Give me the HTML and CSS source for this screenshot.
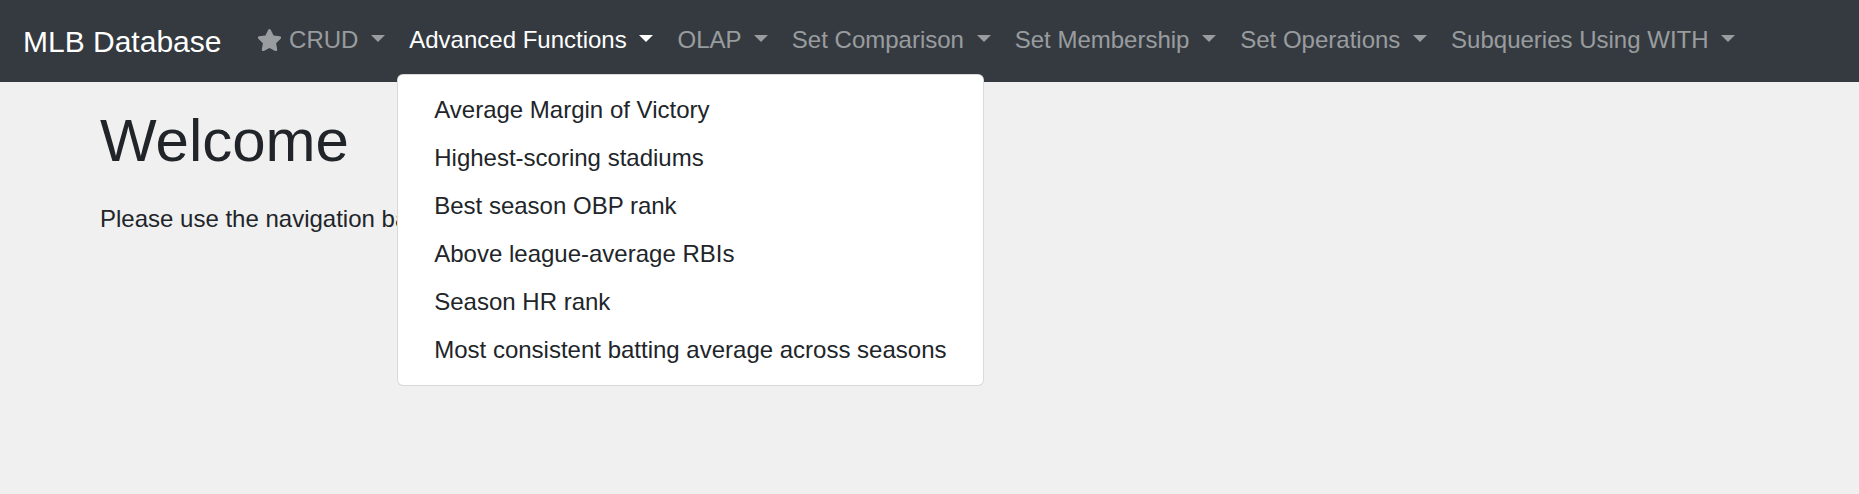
FILE: index.html
```html
<!DOCTYPE html>
<html lang="en">
<head>
<meta charset="utf-8">
<title>MLB Database</title>
<link rel="stylesheet" href="styles.css">
</head>
<body>
<nav class="navbar">
  <a class="brand" href="#">MLB Database</a>
  <ul class="nav">
    <li class="nav-item"><a class="nav-link toggle" href="#"><svg class="star" viewBox="0 0 576 512" aria-hidden="true"><path d="M259.3 17.8L194 150.2 47.9 171.5c-26.2 3.8-36.7 36.1-17.7 54.6l105.7 103-25 145.5c-4.5 26.3 23.2 46 46.4 33.7L288 439.6l130.7 68.7c23.2 12.2 50.9-7.4 46.4-33.7l-25-145.5 105.7-103c19-18.5 8.5-50.8-17.7-54.6L382 150.2 316.7 17.8c-11.7-23.6-45.6-23.9-57.4 0z"/></svg> CRUD </a></li>
    <li class="nav-item open"><a class="nav-link toggle active" href="#">Advanced Functions </a>
      <div class="menu">
        <a class="menu-item" href="#">Average Margin of Victory</a>
        <a class="menu-item" href="#">Highest-scoring stadiums</a>
        <a class="menu-item" href="#">Best season OBP rank</a>
        <a class="menu-item" href="#">Above league-average RBIs</a>
        <a class="menu-item" href="#">Season HR rank</a>
        <a class="menu-item" href="#">Most consistent batting average across seasons</a>
      </div>
    </li>
    <li class="nav-item"><a class="nav-link toggle" href="#">OLAP </a></li>
    <li class="nav-item"><a class="nav-link toggle" href="#">Set Comparison </a></li>
    <li class="nav-item"><a class="nav-link toggle" href="#">Set Membership </a></li>
    <li class="nav-item"><a class="nav-link toggle" href="#">Set Operations </a></li>
    <li class="nav-item"><a class="nav-link toggle" href="#">Subqueries Using WITH </a></li>
  </ul>
</nav>
<main class="content">
  <h1 class="title">Welcome</h1>
  <p class="lead">Please use the navigation bar above to explore the database.</p>
</main>
</body>
</html>
```

FILE: styles.css
```css
* { box-sizing: border-box; }

html, body {
  margin: 0;
  padding: 0;
}

html {
  background: #f0f0f0;
}

body {
  min-height: 100vh;
  background: #f0f0f0;
  color: #212529;
  font-family: "Liberation Sans", Arial, sans-serif;
  font-size: 24px;
  line-height: 36px;
}

a { text-decoration: none; }

.navbar {
  display: flex;
  align-items: center;
  height: 82px;
  padding: 11px 23px;
  background: #343a40;
}

.brand {
  display: inline-block;
  color: #fff;
  font-size: 30px;
  line-height: 45px;
  padding: 7.5px 0;
  margin-right: 24px;
  white-space: nowrap;
}

.nav {
  display: flex;
  list-style: none;
  margin: 0;
  padding: 0;
}

.nav-item {
  position: relative;
}

.nav-link {
  display: block;
  padding: 11px 12px 13px;
  color: rgba(255, 255, 255, 0.5);
  white-space: nowrap;
}

.nav-link.active {
  color: #fff;
}

.toggle::after {
  content: "";
  display: inline-block;
  margin-left: 0.255em;
  vertical-align: 0.255em;
  border-top: 0.3em solid;
  border-right: 0.3em solid transparent;
  border-left: 0.3em solid transparent;
  border-bottom: 0;
}

.star {
  width: 25px;
  height: 24px;
  fill: currentColor;
  vertical-align: -4px;
}

.menu {
  position: absolute;
  top: 100%;
  left: 0;
  z-index: 10;
  margin-top: 3px;
  padding: 11px 0;
  background: #fff;
  border: 1px solid rgba(0, 0, 0, 0.15);
  border-radius: 6px;
  white-space: nowrap;
}

.menu-item {
  display: block;
  padding: 6px 36px;
  color: #212529;
}

.content {
  padding: 23px 100px 0;
}

.title {
  margin: 0 0 24px;
  font-size: 60px;
  font-weight: 500;
  line-height: 72px;
}

.lead {
  margin: 0;
}
```
